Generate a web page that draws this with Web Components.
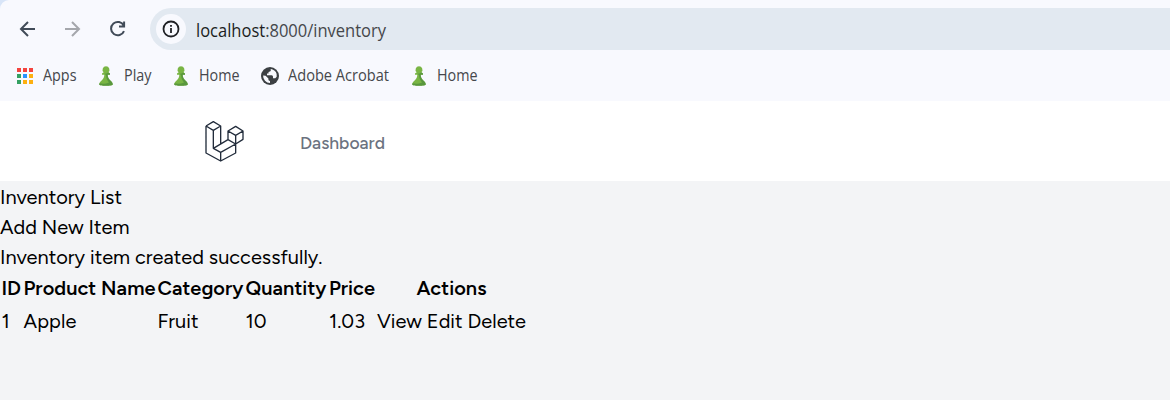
<!DOCTYPE html>
<html lang="en"><head><meta charset="utf-8"><title>Inventory</title>
<style>body{margin:0;background:#f3f4f6;overflow:hidden}</style></head>
<body>
<browser-bar></browser-bar>
<app-nav><fit-text w="85">Dashboard</fit-text></app-nav>
<inventory-page></inventory-page>
<script>
// Single line of text whose advance is adjusted to the width in `w`.
class FitText extends HTMLElement{
  connectedCallback(){
    const w=+this.getAttribute('w');
    if(!this.shadowRoot){
      this.attachShadow({mode:'open'}).innerHTML=`<style>:host{display:block;white-space:pre;width:${w}px}span{display:inline-block;transform-origin:0 50%}</style><span><slot></slot></span>`;
    }
    const s=this.shadowRoot.querySelector('span');
    const fit=()=>{
      const n=s.getBoundingClientRect().width;
      if(!n)return;
      if(this.hasAttribute('scale'))s.style.transform=`scaleX(${w/n})`;
      else s.style.letterSpacing=(w-n)/this.textContent.length+'px';
    };
    fit();
  }
}
class PawnIcon extends HTMLElement{
  constructor(){super();this.attachShadow({mode:'open'}).innerHTML=`<style>:host{display:block;width:14px;height:20px}svg{display:block}</style>
  <svg width="14" height="20" viewBox="0 0 14 20"><path fill="#79b544" d="M7 .2a3.500 3.500 0 0 0-2.300 6.100L3 7.600v1.100h2.300c0 2.400-1 4.300-2.700 5.700C1 15.700.2 17 .2 18.500c0 .8 3 1.300 6.800 1.300s6.800-.5 6.800-1.300c0-1.500-.8-2.800-2.400-4.100-1.700-1.400-2.700-3.300-2.700-5.700H11V7.600L9.300 6.300A3.500 3.500 0 0 0 7 .2z"/><path fill="#4f8d3b" d="M9.300 6.300 11 7.600v1.100H8.700c0 2.400 1 4.300 2.700 5.700 1.600 1.300 2.400 2.600 2.400 4.100 0 .8-3 1.300-6.800 1.300s-6.800-.5-6.800-1.300l.2-1.200c2.400.7 7 .6 9.600-.9-1.700-2-3-4.600-3-7.700L5.300 8l2.900-.8z" opacity=".75"/></svg>`}
}
class BrowserBar extends HTMLElement{
  constructor(){super();this.attachShadow({mode:'open'}).innerHTML=`<style>
  :host{display:block;height:101px;background:#d8e5f8;font:15.500px/20px "Open Sans",sans-serif;color:#45474b}
  .sheet{height:101px;box-sizing:border-box;background:#f8f9fe;border-top-left-radius:9px;padding-top:8px}
  .tools{display:flex;height:42px;align-items:center;padding-left:18px}
  svg{display:block;flex:none}
  .b{margin-right:25px}
  .url{flex:1;display:flex;align-items:center;height:42px;background:#e2e9f1;border-radius:21px 0 0 21px;margin-left:-3px;padding-left:6px;font-size:17.500px;line-height:24px}
  .url fit-text{padding-top:1px}
  .info{display:grid;place-items:center;width:30px;height:30px;border-radius:50%;background:#f8f9fe;margin-right:10px;flex:none}
  b{font-weight:400;color:#1c1e22}
  .marks{display:flex;height:52px;align-items:center}
  .marks>*{flex:none}
  .marks fit-text{padding-bottom:2px}
  </style><div class="sheet"><div class="tools">
  <svg class="b" width="20" height="20" viewBox="0 0 20 20" fill="none" stroke="#414b58" stroke-width="2"><path d="M17 10H3.500M10 3l-7 7 7 7"/></svg>
  <svg class="b" width="20" height="20" viewBox="0 0 20 20" fill="none" stroke="#a5a7ac" stroke-width="2"><path d="M2 10h13.500M9 3l7 7-7 7"/></svg>
  <svg class="b" width="20" height="20" viewBox="0 0 20 20" fill="none" stroke="#414b58" stroke-width="2"><path d="M15.800 6.700A6.700 6.700 0 1 0 16 12.100M16.100 2.500v5H11"/></svg>
  <div class="url"><span class="info"><svg width="18" height="18" viewBox="0 0 18 18"><circle cx="9" cy="9" r="7.500" fill="none" stroke="#1f2125" stroke-width="1.800"/><path fill="#1f2125" d="M8.100 8h1.800v5H8.100zM8.100 5h1.800v1.800H8.100z"/></svg></span><fit-text w="190" scale><b>localhost</b>:8000/inventory</fit-text></div></div>
  <div class="marks">
  <svg width="16" height="16" viewBox="0 0 16 16" style="margin-left:17px;margin-right:9.500px"><path fill="#f4443e" d="M0 0h4v4H0zM6 0h4v4H6zM12 0h4v4h-4z"/><path fill="#34a162" d="M0 6h4v4H0zM0 12h4v4H0z"/><path fill="#2894ff" d="M6 6h4v4H6z"/><path fill="#fdb010" d="M12 6h4v4h-4zM6 12h4v4H6zM12 12h4v4h-4z"/></svg>
  <fit-text w="33.500" scale>Apps</fit-text><pawn-icon style="margin:0 10.500px 0 23px"></pawn-icon>
  <fit-text w="27.500" scale>Play</fit-text><pawn-icon style="margin:0 10.500px 0 23px"></pawn-icon>
  <fit-text w="40.500" scale>Home</fit-text>
  <svg width="18" height="18" viewBox="0 0 18 18" style="margin:0 8.500px 0 22px"><circle cx="9" cy="9" r="9" fill="#3c4043"/><path fill="#f8f9fe" d="M9.500 2c.7 1 .3 2.300-.6 2.600L7.500 5v1.400H6v1.800h4.600c1 0 1.400.8 1.400 1.700v1.400h1.600c1 0 1.500-.9 2.100-1.600A6.900 6.900 0 0 0 11 2.300zM2.100 8.600A7 7 0 0 0 9 16v-2.100c-.9 0-1.600-.7-1.600-1.600v-.9L4.600 8.700z"/></svg>
  <fit-text w="101" scale>Adobe Acrobat</fit-text><pawn-icon style="margin:0 10.500px 0 23.500px"></pawn-icon>
  <fit-text w="40.500" scale>Home</fit-text></div></div>`}
}
class AppNav extends HTMLElement{
  constructor(){super();this.attachShadow({mode:'open'}).innerHTML=`<style>
  :host{display:flex;height:80px;box-sizing:border-box;align-items:center;background:#fff;padding-left:204px;color:#6b7280;font:500 17.500px/24px Figtree,Lato,sans-serif}
  svg{display:block;margin-right:56px}div{padding-top:4px}
  </style><svg width="40" height="40" viewBox="12 14 120 120" overflow="visible" fill="none" stroke="#222c3b" stroke-width="4" stroke-linejoin="round"><path d="M18 29 40 16 62 29V82M18 29V110L62 134 107 110V83L129 69V44L107 30 84 44V70M18 29 40 42 62 29M40 42V96L62 108V134M40 96 84 70 107 83 62 108M84 44 107 57 129 44M107 57V83"/></svg><div><slot></slot></div>`}
}
class InventoryPage extends HTMLElement{
  constructor(){super();this.attachShadow({mode:'open'}).innerHTML=`<style>
  :host{display:block;height:219px;background:#f3f4f6;color:#000;font:20px/30px Figtree,Lato,sans-serif;padding-top:1px;box-sizing:border-box}
  .t{display:grid;grid-template-columns:22px 134px 88px 83.500px 48px 150px;grid-template-rows:33px 33px;padding:1px 0 0 1.500px}
  .h{font-weight:600}.c{justify-self:center;margin-right:1px}
  </style><fit-text w="122">Inventory List</fit-text><fit-text w="129.500">Add New Item</fit-text><fit-text w="322.500">Inventory item created successfully.</fit-text>
  <div class="t"><fit-text class="h" w="19.500">ID</fit-text><fit-text class="h" w="132">Product Name</fit-text><fit-text class="h" w="86">Category</fit-text><fit-text class="h" w="81">Quantity</fit-text><fit-text class="h" w="46">Price</fit-text><fit-text class="h c" w="70">Actions</fit-text>
  <fit-text w="8">1</fit-text><fit-text w="53">Apple</fit-text><fit-text w="41">Fruit</fit-text><fit-text w="21">10</fit-text><fit-text w="36">1.03</fit-text><fit-text w="149">View Edit Delete</fit-text></div>`}
}
customElements.define('pawn-icon',PawnIcon);
customElements.define('browser-bar',BrowserBar);
customElements.define('app-nav',AppNav);
customElements.define('inventory-page',InventoryPage);
customElements.define('fit-text',FitText);
</script>
</body></html>
